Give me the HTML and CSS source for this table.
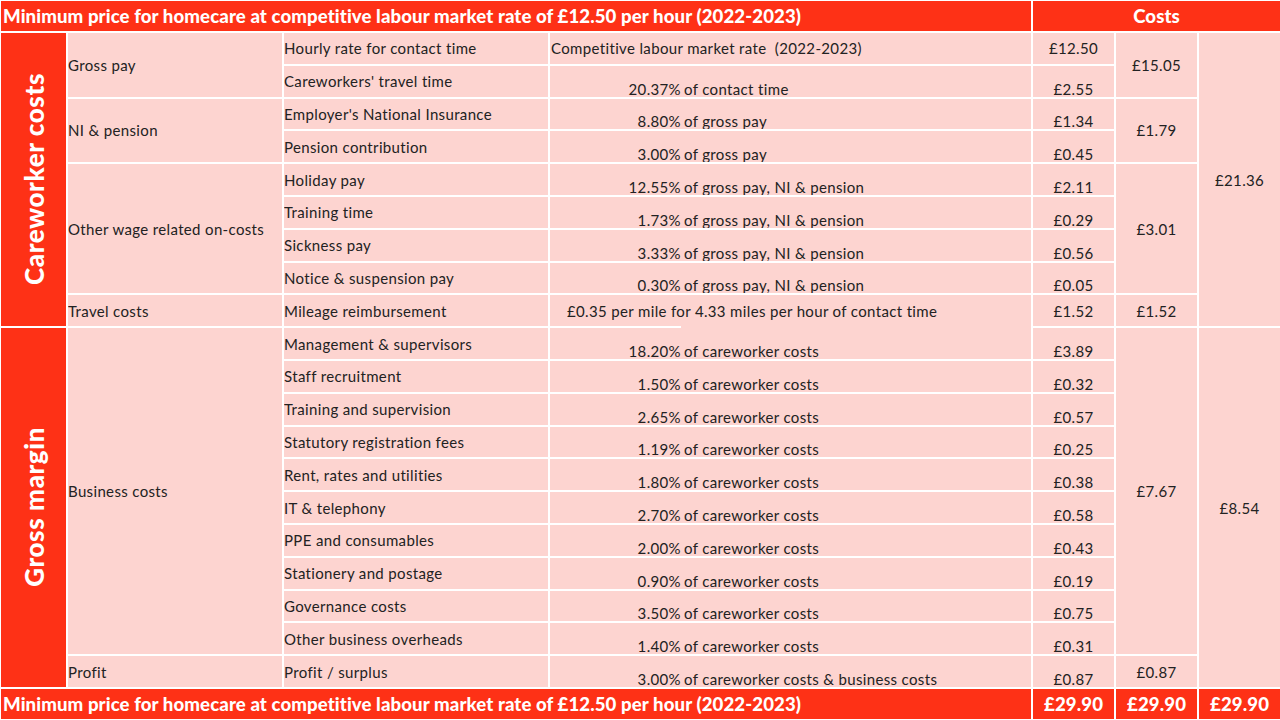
FILE: index.html
```html
<!DOCTYPE html>
<html lang="en">
<head>
<meta charset="utf-8">
<title>Minimum price for homecare</title>
<link rel="stylesheet" href="styles.css">
</head>
<body>
<table class="costs">
  <colgroup>
    <col class="c-side"><col class="c-group"><col class="c-item"><col class="c-basis"><col class="c-val"><col class="c-val"><col class="c-val">
  </colgroup>
  <thead>
    <tr class="head">
      <th colspan="4" class="title">Minimum price for homecare at competitive labour market rate of £12.50 per hour (2022-2023)</th>
      <th colspan="3" class="costs-h">Costs</th>
    </tr>
  </thead>
  <tbody>
    <tr>
      <th rowspan="9" class="side"><span>Careworker costs</span></th>
      <td rowspan="2" class="group">Gross pay</td>
      <td class="item">Hourly rate for contact time</td>
      <td class="basis first">Competitive labour market rate&nbsp; (2022-2023)</td>
      <td class="val">£12.50</td>
      <td rowspan="2" class="val">£15.05</td>
      <td rowspan="9" class="val">£21.36</td>
    </tr>
    <tr>
      <td class="item">Careworkers' travel time</td>
      <td class="basis low"><span class="pct">20.37%</span>of contact time</td>
      <td class="val low">£2.55</td>
    </tr>
    <tr>
      <td rowspan="2" class="group">NI &amp; pension</td>
      <td class="item">Employer's National Insurance</td>
      <td class="basis low"><span class="pct">8.80%</span>of gross pay</td>
      <td class="val low">£1.34</td>
      <td rowspan="2" class="val">£1.79</td>
    </tr>
    <tr>
      <td class="item">Pension contribution</td>
      <td class="basis low"><span class="pct">3.00%</span>of gross pay</td>
      <td class="val low">£0.45</td>
    </tr>
    <tr>
      <td rowspan="4" class="group">Other wage related on-costs</td>
      <td class="item">Holiday pay</td>
      <td class="basis low"><span class="pct">12.55%</span>of gross pay, NI &amp; pension</td>
      <td class="val low">£2.11</td>
      <td rowspan="4" class="val">£3.01</td>
    </tr>
    <tr>
      <td class="item">Training time</td>
      <td class="basis low"><span class="pct">1.73%</span>of gross pay, NI &amp; pension</td>
      <td class="val low">£0.29</td>
    </tr>
    <tr>
      <td class="item">Sickness pay</td>
      <td class="basis low"><span class="pct">3.33%</span>of gross pay, NI &amp; pension</td>
      <td class="val low">£0.56</td>
    </tr>
    <tr>
      <td class="item">Notice &amp; suspension pay</td>
      <td class="basis low"><span class="pct">0.30%</span>of gross pay, NI &amp; pension</td>
      <td class="val low">£0.05</td>
    </tr>
    <tr>
      <td class="group">Travel costs</td>
      <td class="item">Mileage reimbursement</td>
      <td class="basis mileage">£0.35 per mile for 4.33 miles per hour of contact time</td>
      <td class="val">£1.52</td>
      <td class="val">£1.52</td>
    </tr>
    <tr>
      <th rowspan="11" class="side"><span>Gross margin</span></th>
      <td rowspan="10" class="group">Business costs</td>
      <td class="item">Management &amp; supervisors</td>
      <td class="basis low"><span class="pct">18.20%</span>of careworker costs</td>
      <td class="val low">£3.89</td>
      <td rowspan="10" class="val">£7.67</td>
      <td rowspan="11" class="val">£8.54</td>
    </tr>
    <tr>
      <td class="item">Staff recruitment</td>
      <td class="basis low"><span class="pct">1.50%</span>of careworker costs</td>
      <td class="val low">£0.32</td>
    </tr>
    <tr>
      <td class="item">Training and supervision</td>
      <td class="basis low"><span class="pct">2.65%</span>of careworker costs</td>
      <td class="val low">£0.57</td>
    </tr>
    <tr>
      <td class="item">Statutory registration fees</td>
      <td class="basis low"><span class="pct">1.19%</span>of careworker costs</td>
      <td class="val low">£0.25</td>
    </tr>
    <tr>
      <td class="item">Rent, rates and utilities</td>
      <td class="basis low"><span class="pct">1.80%</span>of careworker costs</td>
      <td class="val low">£0.38</td>
    </tr>
    <tr>
      <td class="item">IT &amp; telephony</td>
      <td class="basis low"><span class="pct">2.70%</span>of careworker costs</td>
      <td class="val low">£0.58</td>
    </tr>
    <tr>
      <td class="item">PPE and consumables</td>
      <td class="basis low"><span class="pct">2.00%</span>of careworker costs</td>
      <td class="val low">£0.43</td>
    </tr>
    <tr>
      <td class="item">Stationery and postage</td>
      <td class="basis low"><span class="pct">0.90%</span>of careworker costs</td>
      <td class="val low">£0.19</td>
    </tr>
    <tr>
      <td class="item">Governance costs</td>
      <td class="basis low"><span class="pct">3.50%</span>of careworker costs</td>
      <td class="val low">£0.75</td>
    </tr>
    <tr>
      <td class="item">Other business overheads</td>
      <td class="basis low"><span class="pct">1.40%</span>of careworker costs</td>
      <td class="val low">£0.31</td>
    </tr>
    <tr>
      <td class="group">Profit</td>
      <td class="item">Profit / surplus</td>
      <td class="basis low"><span class="pct">3.00%</span>of careworker costs &amp; business costs</td>
      <td class="val low">£0.87</td>
      <td class="val">£0.87</td>
    </tr>
  </tbody>
  <tfoot>
    <tr class="foot">
      <th colspan="4" class="title">Minimum price for homecare at competitive labour market rate of £12.50 per hour (2022-2023)</th>
      <th class="total">£29.90</th>
      <th class="total">£29.90</th>
      <th class="total">£29.90</th>
    </tr>
  </tfoot>
</table>
</body>
</html>
```

FILE: styles.css
```css
html, body {
  margin: 0;
  padding: 0;
  background: #ffffff;
  overflow: hidden;
}

body {
  font-family: Lato, "Liberation Sans", sans-serif;
  color: #222222;
}

.costs {
  margin: -1px;
  width: 1283px;
  table-layout: fixed;
  border-collapse: separate;
  border-spacing: 2px;
  background: #ffffff;
}

.c-side { width: 65px; }
.c-group { width: 214px; }
.c-item { width: 264px; }
.c-basis { width: 481px; }
.c-val { width: 81px; }

.costs th,
.costs td {
  padding: 0;
  font-size: 15px;
  font-weight: 400;
  letter-spacing: 0.35px;
  white-space: nowrap;
  overflow: hidden;
  line-height: 16px;
}

.costs tbody tr {
  height: 30.8px;
}

.costs td {
  background: #fdd4d0;
  vertical-align: middle;
}

.head,
.foot {
  height: 30px;
}

.head th,
.foot th {
  background: #fe3116;
  color: #ffffff;
  font-size: 18.6px;
  font-weight: 900;
  letter-spacing: 0.1px;
  line-height: 20px;
  vertical-align: middle;
}

.title {
  text-align: left;
  padding-left: 2px !important;
}

.costs-h,
.total {
  text-align: center;
}

.side {
  background: #fe3116;
  color: #ffffff;
  vertical-align: middle;
  text-align: center;
}

.side span {
  display: inline-block;
  writing-mode: vertical-rl;
  transform: rotate(180deg);
  font-size: 26px;
  font-weight: 900;
  line-height: 30px;
  letter-spacing: 0.6px;
}

.group,
.item {
  text-align: left;
}

.basis {
  text-align: left;
}

.basis.first {
  padding-left: 1px !important;
}

.basis.mileage {
  padding-left: 17px !important;
  position: relative;
  overflow: visible;
}

.basis.mileage::after {
  content: "";
  position: absolute;
  left: 131px;
  right: 0;
  bottom: -2px;
  height: 2px;
  background: #fdd4d0;
}

.pct {
  display: inline-block;
  width: 131px;
  text-align: right;
  margin-right: 3px;
}

.val {
  text-align: center;
}

.costs td.low {
  vertical-align: bottom;
}
```
